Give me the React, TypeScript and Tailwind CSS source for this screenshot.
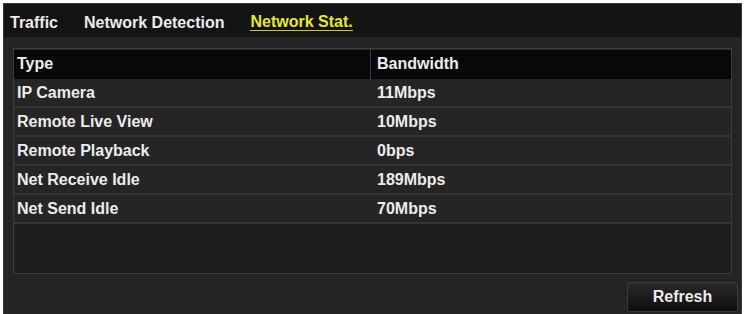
const rows = [
  { type: "IP Camera", bandwidth: "11Mbps" },
  { type: "Remote Live View", bandwidth: "10Mbps" },
  { type: "Remote Playback", bandwidth: "0bps" },
  { type: "Net Receive Idle", bandwidth: "189Mbps" },
  { type: "Net Send Idle", bandwidth: "70Mbps" }
];

const tabs = ["Traffic", "Network Detection", "Network Stat."];

export default function App() {
  return (
    <div className="h-[314px] w-[745px] bg-white pt-[3px] pl-[3px] pr-[3px] font-['Liberation_Sans',Arial,sans-serif] font-bold text-[16px] text-[#ececec]">
      <div className="flex h-full flex-col border border-b-0 border-[#3a3a3a] bg-[#242424]">
        {/* tab bar */}
        <div className="flex h-[33px] items-center gap-[26px] bg-[#141414] px-[6px] pt-[3px]">
          {tabs.map((tab, i) => (
            <span
              key={tab}
              className={
                i === 2
                  ? "border-b-[1.5px] border-[#c9c83a] leading-[17px] text-[#e6e63c]"
                  : "leading-[17px]"
              }
            >
              {tab}
            </span>
          ))}
        </div>

        {/* table */}
        <div className="mx-[9px] mt-[11px] flex h-[226px] flex-col border border-[#3c3c3c] bg-[#1e1e1e]">
          <div className="grid h-[30px] grid-cols-[357px_1fr] bg-[#080808] shadow-[inset_0_1px_0_#2a2a2a]">
            <div className="flex items-center border-r border-[#3a3a3a] pl-[3px]">Type</div>
            <div className="flex items-center pl-[6px]">Bandwidth</div>
          </div>
          {rows.map((row) => (
            <div
              key={row.type}
              className="grid h-[29px] grid-cols-[357px_1fr] border-b-2 border-[#353535] bg-[#252525]"
            >
              <div className="flex items-center pl-[3px]">{row.type}</div>
              <div className="flex items-center pl-[6px]">{row.bandwidth}</div>
            </div>
          ))}
          <div className="flex-1" />
        </div>

        {/* footer */}
        <div className="flex flex-1 items-end justify-end pr-[3px] pb-[2px]">
          <button className="h-[30px] w-[111px] rounded-[2px] border border-[#3a3a3a] bg-gradient-to-b from-[#2a2a2a] to-[#0e0e0e] text-[16px] font-bold text-[#ececec]">
            Refresh
          </button>
        </div>
      </div>
    </div>
  );
}
